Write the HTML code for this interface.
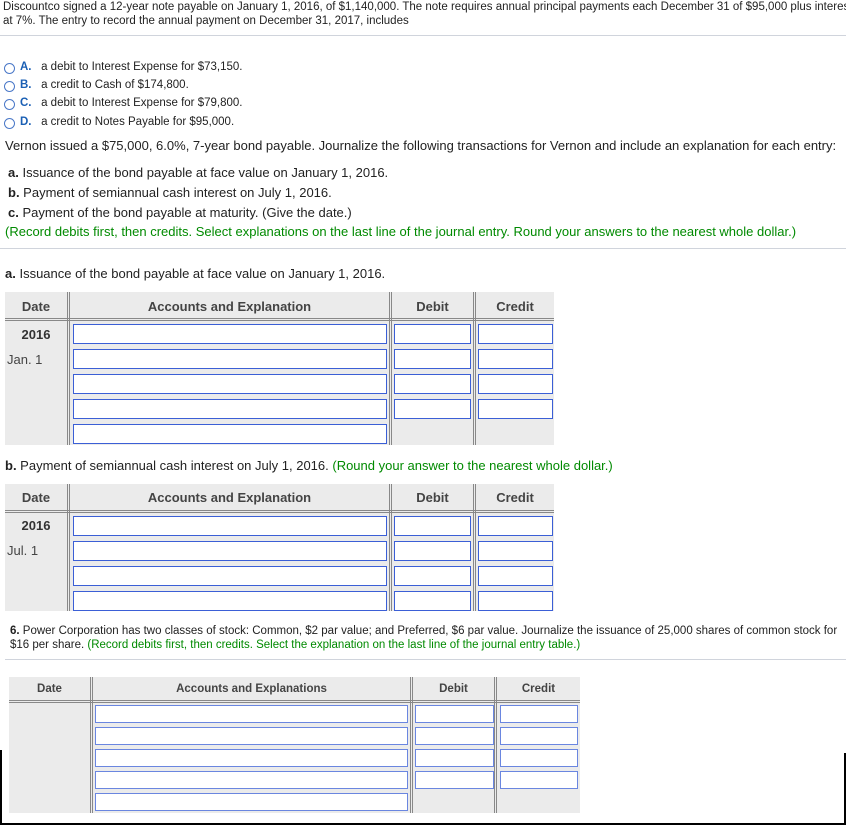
<!DOCTYPE html>
<html><head><style>
body{margin:0;width:846px;height:825px;background:#fff;position:relative;overflow:hidden;font-family:"Liberation Sans",Arial,sans-serif;color:#222}
.t{position:absolute;white-space:nowrap}
.s{font-size:11.5px}
.m{font-size:13px}
.g{color:#008a00}
.bl{color:#1a5fb4;font-weight:bold}
.hr{position:absolute;height:1px;background:#d0d4dc}
.rad{position:absolute;width:9px;height:9px;border:1px solid #4a78c8;border-radius:50%;left:4px}
.tb{position:absolute;background:#ebebeb}
.vs{position:absolute;width:1px;border-left:1px solid #888;border-right:1px solid #888;width:1px}
.hs{position:absolute;height:1px;border-top:1px solid #888;border-bottom:1px solid #888}
.in{position:absolute;background:#fff;border:1px solid #3b5fd6;box-sizing:border-box}
.h{position:absolute;font-weight:bold;font-size:13px;color:#444;text-align:center}
.h3{position:absolute;font-weight:bold;font-size:11.5px;color:#444;text-align:center}
</style></head><body>
<div class="t s" style="left:3px;top:1px">Discountco signed a 12-year note payable on January 1, 2016, of $1,140,000. The note requires annual principal payments each December 31 of $95,000 plus interest</div>
<div class="t s" style="left:3px;top:15px">at 7%. The entry to record the annual payment on December 31, 2017, includes</div>
<div class="hr" style="left:0;top:35px;width:846px"></div>
<div class="rad" style="top:63px"></div><div class="t s" style="left:20px;top:61px"><span class="bl">A.</span>&nbsp;&nbsp; a debit to Interest Expense for $73,150.</div>
<div class="rad" style="top:81px"></div><div class="t s" style="left:20px;top:79px"><span class="bl">B.</span>&nbsp;&nbsp; a credit to Cash of $174,800.</div>
<div class="rad" style="top:99px"></div><div class="t s" style="left:20px;top:97px"><span class="bl">C.</span>&nbsp;&nbsp; a debit to Interest Expense for $79,800.</div>
<div class="rad" style="top:118px"></div><div class="t s" style="left:20px;top:116px"><span class="bl">D.</span>&nbsp;&nbsp; a credit to Notes Payable for $95,000.</div>
<div class="t m" style="left:5px;top:138px">Vernon issued a $75,000, 6.0%, 7-year bond payable. Journalize the following transactions for Vernon and include an explanation for each entry:</div>
<div class="t m" style="left:8px;top:165px"><b>a.</b> Issuance of the bond payable at face value on January 1, 2016.</div>
<div class="t m" style="left:8px;top:185px"><b>b.</b> Payment of semiannual cash interest on July 1, 2016.</div>
<div class="t m" style="left:8px;top:205px"><b>c.</b> Payment of the bond payable at maturity. (Give the date.)</div>
<div class="t m g" style="left:5px;top:224px">(Record debits first, then credits. Select explanations on the last line of the journal entry. Round your answers to the nearest whole dollar.)</div>
<div class="hr" style="left:0;top:248px;width:846px"></div>
<div class="t m" style="left:5px;top:266px"><b>a.</b> Issuance of the bond payable at face value on January 1, 2016.</div>

<div class="tb" style="left:5px;top:292px;width:549px;height:153px"></div>
<div class="hs" style="left:5px;top:318px;width:549px"></div>
<div class="vs" style="left:67px;top:292px;height:153px"></div>
<div class="vs" style="left:389px;top:292px;height:153px"></div>
<div class="vs" style="left:473px;top:292px;height:153px"></div>
<div class="h" style="left:5px;top:299px;width:62px">Date</div>
<div class="h" style="left:70px;top:299px;width:319px">Accounts and Explanation</div>
<div class="h" style="left:392px;top:299px;width:81px">Debit</div>
<div class="h" style="left:476px;top:299px;width:78px">Credit</div>
<div class="h" style="left:5px;top:327px;width:62px;color:#333">2016</div>
<div class="t m" style="left:7px;top:352px;color:#444">Jan. 1</div>
<div class="in" style="left:73px;top:324px;width:314px;height:20px"></div>
<div class="in" style="left:73px;top:349px;width:314px;height:20px"></div>
<div class="in" style="left:73px;top:374px;width:314px;height:20px"></div>
<div class="in" style="left:73px;top:399px;width:314px;height:20px"></div>
<div class="in" style="left:73px;top:424px;width:314px;height:20px"></div>
<div class="in" style="left:394px;top:324px;width:77px;height:20px"></div>
<div class="in" style="left:394px;top:349px;width:77px;height:20px"></div>
<div class="in" style="left:394px;top:374px;width:77px;height:20px"></div>
<div class="in" style="left:394px;top:399px;width:77px;height:20px"></div>
<div class="in" style="left:478px;top:324px;width:75px;height:20px"></div>
<div class="in" style="left:478px;top:349px;width:75px;height:20px"></div>
<div class="in" style="left:478px;top:374px;width:75px;height:20px"></div>
<div class="in" style="left:478px;top:399px;width:75px;height:20px"></div>

<div class="t m" style="left:5px;top:458px"><b>b.</b> Payment of semiannual cash interest on July 1, 2016. <span class="g">(Round your answer to the nearest whole dollar.)</span></div>

<div class="tb" style="left:5px;top:484px;width:549px;height:127px"></div>
<div class="hs" style="left:5px;top:510px;width:549px"></div>
<div class="vs" style="left:67px;top:484px;height:127px"></div>
<div class="vs" style="left:389px;top:484px;height:127px"></div>
<div class="vs" style="left:473px;top:484px;height:127px"></div>
<div class="h" style="left:5px;top:490px;width:62px">Date</div>
<div class="h" style="left:70px;top:490px;width:319px">Accounts and Explanation</div>
<div class="h" style="left:392px;top:490px;width:81px">Debit</div>
<div class="h" style="left:476px;top:490px;width:78px">Credit</div>
<div class="h" style="left:5px;top:518px;width:62px;color:#333">2016</div>
<div class="t m" style="left:7px;top:543px;color:#444">Jul. 1</div>
<div class="in" style="left:73px;top:516px;width:314px;height:20px"></div>
<div class="in" style="left:73px;top:541px;width:314px;height:20px"></div>
<div class="in" style="left:73px;top:566px;width:314px;height:20px"></div>
<div class="in" style="left:73px;top:591px;width:314px;height:20px"></div>
<div class="in" style="left:394px;top:516px;width:77px;height:20px"></div>
<div class="in" style="left:394px;top:541px;width:77px;height:20px"></div>
<div class="in" style="left:394px;top:566px;width:77px;height:20px"></div>
<div class="in" style="left:394px;top:591px;width:77px;height:20px"></div>
<div class="in" style="left:478px;top:516px;width:75px;height:20px"></div>
<div class="in" style="left:478px;top:541px;width:75px;height:20px"></div>
<div class="in" style="left:478px;top:566px;width:75px;height:20px"></div>
<div class="in" style="left:478px;top:591px;width:75px;height:20px"></div>

<div class="t s" style="left:10px;top:625px"><b>6.</b> Power Corporation has two classes of stock: Common, $2 par value; and Preferred, $6 par value. Journalize the issuance of 25,000 shares of common stock for</div>
<div class="t s" style="left:10px;top:639px">$16 per share. <span class="g">(Record debits first, then credits. Select the explanation on the last line of the journal entry table.)</span></div>
<div class="hr" style="left:5px;top:659px;width:841px"></div>

<div class="tb" style="left:9px;top:677px;width:571px;height:136px"></div>
<div class="hs" style="left:9px;top:700px;width:571px"></div>
<div class="vs" style="left:90px;top:677px;height:136px"></div>
<div class="vs" style="left:410px;top:677px;height:136px"></div>
<div class="vs" style="left:494px;top:677px;height:136px"></div>
<div class="h3" style="left:9px;top:683px;width:81px">Date</div>
<div class="h3" style="left:93px;top:683px;width:317px">Accounts and Explanations</div>
<div class="h3" style="left:413px;top:683px;width:81px">Debit</div>
<div class="h3" style="left:497px;top:683px;width:83px">Credit</div>
<div class="in" style="left:95px;top:705px;width:313px;height:18px;border-color:#6a86e0"></div>
<div class="in" style="left:95px;top:727px;width:313px;height:18px;border-color:#6a86e0"></div>
<div class="in" style="left:95px;top:749px;width:313px;height:18px;border-color:#6a86e0"></div>
<div class="in" style="left:95px;top:771px;width:313px;height:18px;border-color:#6a86e0"></div>
<div class="in" style="left:95px;top:793px;width:313px;height:18px;border-color:#6a86e0"></div>
<div class="in" style="left:415px;top:705px;width:79px;height:18px;border-color:#6a86e0"></div>
<div class="in" style="left:415px;top:727px;width:79px;height:18px;border-color:#6a86e0"></div>
<div class="in" style="left:415px;top:749px;width:79px;height:18px;border-color:#6a86e0"></div>
<div class="in" style="left:415px;top:771px;width:79px;height:18px;border-color:#6a86e0"></div>
<div class="in" style="left:500px;top:705px;width:78px;height:18px;border-color:#6a86e0"></div>
<div class="in" style="left:500px;top:727px;width:78px;height:18px;border-color:#6a86e0"></div>
<div class="in" style="left:500px;top:749px;width:78px;height:18px;border-color:#6a86e0"></div>
<div class="in" style="left:500px;top:771px;width:78px;height:18px;border-color:#6a86e0"></div>

<div style="position:absolute;left:0;top:750px;width:2px;height:75px;background:#000"></div>
<div style="position:absolute;left:844px;top:753px;width:2px;height:72px;background:#000"></div>
<div style="position:absolute;left:0;top:823px;width:846px;height:2px;background:#000"></div>
</body></html>
